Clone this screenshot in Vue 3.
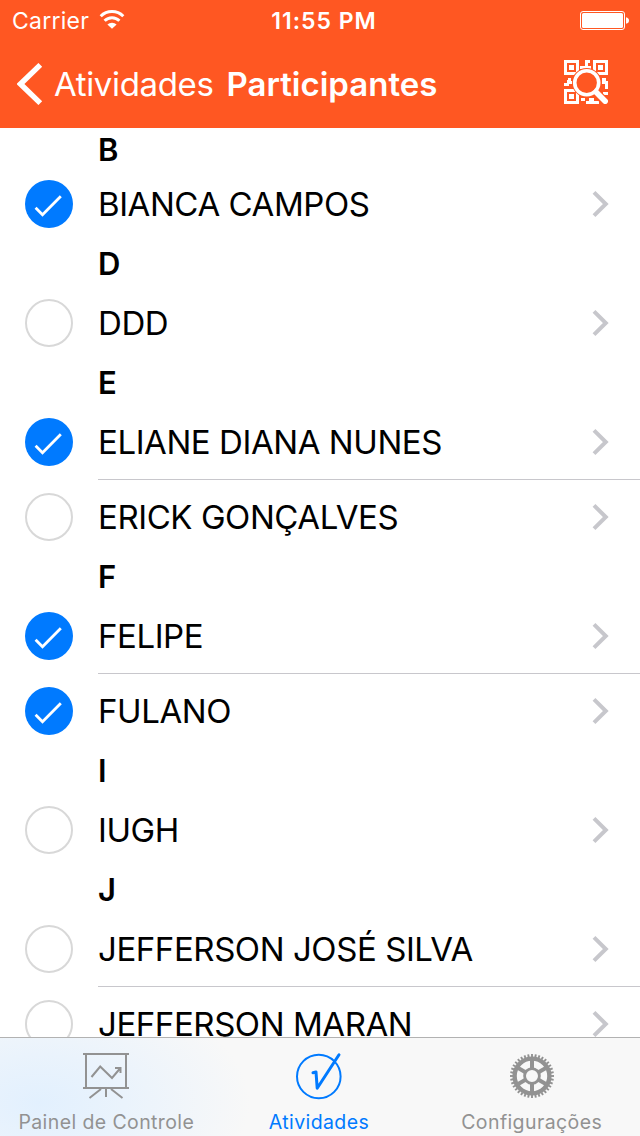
<script setup>
import { ref } from 'vue';

const sections = ref([
  { letter: 'B', people: [{ name: 'BIANCA CAMPOS', checked: true }] },
  { letter: 'D', people: [{ name: 'DDD', checked: false }] },
  {
    letter: 'E',
    people: [
      { name: 'ELIANE DIANA NUNES', checked: true },
      { name: 'ERICK GONÇALVES', checked: false },
    ],
  },
  {
    letter: 'F',
    people: [
      { name: 'FELIPE', checked: true },
      { name: 'FULANO', checked: true },
    ],
  },
  { letter: 'I', people: [{ name: 'IUGH', checked: false }] },
  {
    letter: 'J',
    people: [
      { name: 'JEFFERSON JOSÉ SILVA', checked: false },
      { name: 'JEFFERSON MARAN', checked: false },
    ],
  },
]);

const activeTab = ref('atividades');

function toggle(person) {
  person.checked = !person.checked;
}

// 36 teeth and 6 spokes around the gear
const teeth = Array.from({ length: 36 }, (_, i) => i * 10);
const spokes = [0, 60, 120, 180, 240, 300];
</script>

<template>
  <div class="screen">
    <header class="top">
      <div class="status-bar">
        <div class="status-left">
          <span class="carrier">Carrier</span>
          <svg class="wifi" width="26" height="20" viewBox="0 0 26 20">
            <path d="M1.7 6.2a16 16 0 0 1 22.6 0M5.6 10.8a10.4 10.4 0 0 1 14.8 0" fill="none" stroke="#fff" stroke-width="3" />
            <path d="M13 18.8l-4.6-4.2a6.5 6.5 0 0 1 9.2 0z" fill="#fff" />
          </svg>
        </div>
        <span class="time">11:55 PM</span>
        <div class="status-right">
          <svg width="49" height="19" viewBox="0 0 49 19">
            <rect x=".5" y=".5" width="44" height="18" rx="2.5" fill="none" stroke="#fff" />
            <rect x="2" y="2" width="41" height="15" rx="1.5" fill="#fff" />
            <path d="M46 6.2c2 .4 3 1.6 3 3.3s-1 2.9-3 3.3z" fill="#fff" />
          </svg>
        </div>
      </div>

      <nav class="nav-bar">
        <button class="back">
          <svg width="26" height="42" viewBox="0 0 26 42">
            <path d="M23.3 1.9L3.5 21l19.8 19.1" fill="none" stroke="#fff" stroke-width="5.4" />
          </svg>
          <span>Atividades</span>
        </button>
        <h1 class="title">Participantes</h1>
        <button class="scan" aria-label="QR">
          <svg width="44" height="44" viewBox="0 0 44 44">
            <!-- corner markers -->
            <g fill="none" stroke="#fff" stroke-width="3">
              <rect x="1.5" y="1.5" width="12" height="12" />
              <rect x="30.5" y="1.5" width="12" height="12" />
              <rect x="1.5" y="30.5" width="12" height="12" />
            </g>
            <g fill="#fff">
              <rect x="5" y="5" width="5" height="5" />
              <rect x="34" y="5" width="5" height="5" />
              <rect x="5" y="34" width="5" height="5" />
              <path d="M21 0h5v3h-2v3h3v3h-9V6h3zM16 6h2v3h-2z" />
              <path d="M4 18h3v3h3v3H5v2H0v-3h3v-3h1zM38 18h4v3h2v8h-3v-5h-3z" />
              <path d="M17 38h4v3h-4zM22 41h3v-3h5v3h5v3H22zM39 32h5v3h-5z" />
            </g>
            <!-- magnifier with a gap around it -->
            <path d="M32.5 33l8.5 8.5" stroke="#ff5722" stroke-width="8.6" />
            <circle cx="22.7" cy="22.7" r="14.7" fill="#ff5722" />
            <path d="M32 32l9.2 9.2" stroke="#fff" stroke-width="5.6" stroke-linecap="round" />
            <circle cx="22.7" cy="22.7" r="12" fill="none" stroke="#fff" stroke-width="3.6" />
          </svg>
        </button>
      </nav>
    </header>

    <main class="list">
      <section v-for="section in sections" :key="section.letter" class="section">
        <h2 class="letter">{{ section.letter }}</h2>
        <ul class="people">
          <li v-for="person in section.people" :key="person.name" class="person" @click="toggle(person)">
            <svg class="check" width="48" height="48" viewBox="0 0 48 48">
              <template v-if="person.checked">
                <circle cx="24" cy="24" r="24" fill="#007aff" />
                <path d="M10.6 27.7l6.9 7L35.8 16.3" fill="none" stroke="#fff" stroke-width="2.8" />
              </template>
              <circle v-else cx="24" cy="24" r="23" fill="#fff" stroke="#d8d8d8" stroke-width="2" />
            </svg>
            <div class="cell">
              <span class="name">{{ person.name }}</span>
              <svg width="18" height="28" viewBox="0 0 18 28">
                <path d="M2 2.4L13.8 14 2 25.6" fill="none" stroke="#c7c7cc" stroke-width="4" />
              </svg>
            </div>
          </li>
        </ul>
      </section>
    </main>

    <footer class="tab-bar">
      <button class="tab" :class="{ active: activeTab === 'painel' }" @click="activeTab = 'painel'">
        <svg width="48" height="48" viewBox="0 0 48 48" fill="none" stroke="currentColor" stroke-width="2">
          <path d="M1 2h46M1 36h46M4 2v34M44 2v34M24 37v8M19 37L7.5 46M29 37l11.5 9" />
          <path d="M9.5 25l8.7-10.5L30 26l8-9.5M33 16h5.5v5" />
        </svg>
        <span>Painel de Controle</span>
      </button>
      <button class="tab" :class="{ active: activeTab === 'atividades' }" @click="activeTab = 'atividades'">
        <svg width="48" height="48" viewBox="0 0 48 48" fill="none" stroke="currentColor">
          <circle cx="23.8" cy="24.5" r="21.8" stroke-width="2" />
          <path d="M18 20.8l3-.8 1.2 16.2L44 2.8" stroke-width="3" stroke-linecap="round" stroke-linejoin="round" />
        </svg>
        <span>Atividades</span>
      </button>
      <button class="tab" :class="{ active: activeTab === 'config' }" @click="activeTab = 'config'">
        <svg width="48" height="48" viewBox="-24 -24 48 48" fill="none" stroke="currentColor">
          <circle r="17.4" stroke-width="4.4" />
          <circle r="7.4" stroke-width="2.8" />
          <path v-for="angle in spokes" :key="'s' + angle" d="M0-7.5V-17" stroke-width="4" :transform="`rotate(${angle})`" />
          <path v-for="angle in teeth" :key="'t' + angle" d="M0-19V-22" stroke-width="1.9" :transform="`rotate(${angle})`" />
        </svg>
        <span>Configurações</span>
      </button>
    </footer>
  </div>
</template>

<style>
body {
  background-color: #ffffff;
}
</style>

<style scoped>
.screen {
  display: flex;
  flex-direction: column;
  width: 640px;
  height: 1136px;
  overflow: hidden;
  font-family: Inter, "Liberation Sans", sans-serif;
  color: #000000;
}

svg {
  display: block;
  flex: none;
}

button {
  margin: 0;
  padding: 0;
  border: none;
  background: none;
  font: inherit;
  color: inherit;
}

.top {
  height: 128px;
  flex: none;
  background-color: #ff5722;
  color: #ffffff;
}

.status-bar {
  display: grid;
  grid-template-columns: 1fr auto 1fr;
  align-items: center;
  box-sizing: border-box;
  height: 41px;
  padding: 0 11px 0 12px;
  font-size: 23px;
  line-height: 41px;
}

.status-bar span {
  position: relative;
  top: 1px;
}

.status-left {
  display: flex;
  align-items: center;
  gap: 10px;
}

.carrier {
  letter-spacing: 0.25px;
  font-weight: 400;
}

.wifi {
  margin-top: -2px;
}

.time {
  padding-left: 7px;
  font-weight: 600;
  letter-spacing: 1px;
}

.status-right {
  display: flex;
  justify-content: flex-end;
}

.nav-bar {
  display: flex;
  align-items: center;
  box-sizing: border-box;
  height: 87px;
  padding: 0 32px 1px 17px;
}

.back {
  display: flex;
  align-items: center;
  gap: 11px;
  font-size: 33px;
  font-weight: 400;
  letter-spacing: -0.35px;
}

.title {
  margin: 0 0 0 13px;
  font-size: 33px;
  font-weight: 600;
}

.scan {
  margin-left: auto;
  margin-top: -4px;
}

.list {
  flex: 1;
  min-height: 0;
  overflow: hidden;
}

.letter {
  height: 44px;
  margin: 0;
  padding-left: 98px;
  font-size: 31px;
  font-weight: 600;
  line-height: 44px;
}

.people {
  margin: 0;
  padding: 0;
  list-style: none;
}

/* the first header is pinned and covers the top of its row */
.section:first-child .people {
  margin-top: -5px;
}

.person {
  display: flex;
  align-items: center;
  gap: 25px;
  height: 75px;
  padding-left: 25px;
}

.check {
  margin-top: -1px;
}

.cell {
  display: flex;
  flex: 1;
  align-items: center;
  justify-content: space-between;
  box-sizing: border-box;
  height: 75px;
  padding-right: 30px;
  border-bottom: 1px solid #c8c7cc;
}

.person:last-child .cell {
  border-bottom-color: transparent;
}

.name {
  font-size: 33px;
  letter-spacing: -0.43px;
  white-space: nowrap;
}

.tab-bar {
  display: grid;
  grid-template-columns: repeat(3, 1fr);
  flex: none;
  box-sizing: border-box;
  height: 99px;
  padding-right: 2px;
  border-top: 1px solid #b2b2b2;
  background: radial-gradient(ellipse 210px 120px at 40px 65px, #e2f0fe, #eaf3fc 40%, rgba(248, 248, 248, 0) 100%), #f8f8f8;
}

.tab {
  display: flex;
  flex-direction: column;
  align-items: center;
  padding-top: 14px;
  color: #929292;
  font-size: 19.5px;
  letter-spacing: 0.4px;
  line-height: 24px;
}

.tab span {
  margin-top: 10px;
}

.tab.active {
  color: #007aff;
}
</style>
